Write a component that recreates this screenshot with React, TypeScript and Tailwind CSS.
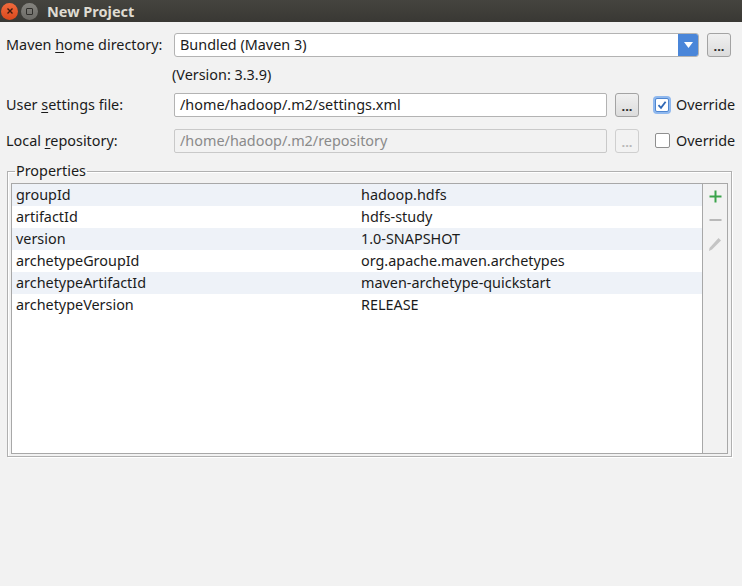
import React from "react";

const font = { fontFamily: '"Noto Sans", "Open Sans", sans-serif' };

function DotsButton({ disabled }: { disabled?: boolean }) {
  return (
    <div
      className={
        "w-[24px] h-[24px] rounded-[3px] border flex items-end justify-center pb-[3px] text-[13px] leading-none font-bold " +
        (disabled
          ? "border-[#cfcfcf] bg-[#f2f2f2] text-[#b8b8b8]"
          : "border-[#a3a3a3] bg-gradient-to-b from-[#f0f0f0] to-[#dcdcdc] text-[#2a2a2a]")
      }
    >
      ...
    </div>
  );
}

function Checkbox({ checked }: { checked?: boolean }) {
  if (checked) {
    return (
      <div className="w-[18px] h-[18px] rounded-[4px] bg-[#8fb8ee] flex items-center justify-center">
        <div className="w-[14px] h-[14px] rounded-[2px] bg-white border border-[#4f86d0] flex items-center justify-center">
          <svg width="10" height="10" viewBox="0 0 10 10">
            <path d="M1.5 5.2 L4 7.8 L8.6 1.8" fill="none" stroke="#2f67b5" strokeWidth="1.8" />
          </svg>
        </div>
      </div>
    );
  }
  return (
    <div className="w-[18px] h-[18px] flex items-center justify-center">
      <div className="w-[15px] h-[15px] rounded-[2px] bg-white border border-[#8f8f8f]" />
    </div>
  );
}

const rows: [string, string][] = [
  ["groupId", "hadoop.hdfs"],
  ["artifactId", "hdfs-study"],
  ["version", "1.0-SNAPSHOT"],
  ["archetypeGroupId", "org.apache.maven.archetypes"],
  ["archetypeArtifactId", "maven-archetype-quickstart"],
  ["archetypeVersion", "RELEASE"],
];

export default function App() {
  return (
    <div className="w-[742px] h-[586px] bg-[#f2f2f2] flex flex-col text-[14.4px] text-[#1b1b1b]" style={font}>
      {/* Title bar */}
      <div className="h-[22px] bg-gradient-to-b from-[#45443f] to-[#393834] flex items-center shrink-0">
        <div className="ml-[1px] w-[17px] h-[17px] rounded-full bg-gradient-to-b from-[#f06a3c] to-[#d9481c] flex items-center justify-center">
          <svg width="8" height="8" viewBox="0 0 8 8">
            <path d="M1.5 1.5 L6.5 6.5 M6.5 1.5 L1.5 6.5" stroke="#3a1a10" strokeWidth="1.4" />
          </svg>
        </div>
        <div className="ml-[3px] w-[17px] h-[17px] rounded-full bg-gradient-to-b from-[#85847f] to-[#6b6a66] flex items-center justify-center">
          <div className="w-[7px] h-[7px] border border-[#2f2e2b] rounded-[1px]" />
        </div>
        <div className="ml-[9px] text-[14.5px] font-bold text-[#dfdbd2] leading-none">New Project</div>
      </div>

      {/* Form */}
      <div className="flex flex-col pl-[6px] pt-[11px]">
        <div className="flex items-center h-[24px] mr-[11px]">
          <div className="w-[168px]">
            Maven <u className="underline-offset-2">h</u>ome directory:
          </div>
          <div className="flex-1 h-[24px] bg-white border border-[#b3b3b3] rounded-[3px] flex items-center overflow-hidden">
            <div className="flex-1 pl-[5px]">Bundled (Maven 3)</div>
            <div className="w-[20px] h-full bg-[#4a86d9] flex items-center justify-center">
              <svg width="9" height="6" viewBox="0 0 9 6">
                <path d="M0 0 L9 0 L4.5 6 Z" fill="#ffffff" />
              </svg>
            </div>
          </div>
          <div className="ml-[8px]">
            <DotsButton />
          </div>
        </div>
        <div className="h-[36px] flex items-center pl-[166px]">(Version: 3.3.9)</div>
        <div className="flex items-center h-[24px]">
          <div className="w-[168px]">
            User <u className="underline-offset-2">s</u>ettings file:
          </div>
          <div className="flex-1 h-[24px] bg-white border border-[#b3b3b3] rounded-[2px] flex items-center pl-[5px]">
            /home/hadoop/.m2/settings.xml
          </div>
          <div className="ml-[8px]">
            <DotsButton />
          </div>
          <div className="ml-[14px] w-[89px] flex items-center">
            <Checkbox checked />
            <span className="ml-[5px]">Override</span>
          </div>
        </div>
        <div className="flex items-center h-[24px] mt-[12px]">
          <div className="w-[168px]">
            Local <u className="underline-offset-2">r</u>epository:
          </div>
          <div className="flex-1 h-[24px] bg-[#f2f2f2] border border-[#c9c9c9] rounded-[2px] flex items-center pl-[5px] text-[#8a8a8a]">
            /home/hadoop/.m2/repository
          </div>
          <div className="ml-[8px]">
            <DotsButton disabled />
          </div>
          <div className="ml-[14px] w-[89px] flex items-center">
            <Checkbox />
            <span className="ml-[5px]">Override</span>
          </div>
        </div>
      </div>

      {/* Properties group */}
      <fieldset className="ml-[7px] mr-[10px] mt-[9px] h-[295px] border border-[#b0b0b0] shadow-[1px_1px_0_#ffffff,inset_1px_1px_0_#ffffff] px-[3px] pb-[3px]">
        <legend className="ml-[4px] px-[1px] leading-[18px]">Properties</legend>
        <div className="h-[271px] mt-[3px] border border-[#a8a8a8] flex bg-white">
          <div className="flex-1 flex flex-col">
            {rows.map(([k, v], i) => (
              <div
                key={k}
                className={"h-[22px] flex items-center " + (i % 2 === 0 ? "bg-[#eef2f8]" : "bg-white")}
              >
                <div className="w-[344px] pl-[4px]">{k}</div>
                <div className="pl-[5px]">{v}</div>
              </div>
            ))}
          </div>
          <div className="w-[25px] border-l border-[#a8a8a8] bg-[#f2f2f2] flex flex-col items-center pt-[6px] gap-[11px]">
            <svg width="13" height="13" viewBox="0 0 13 13">
              <path d="M6.5 0.5 V12.5 M0.5 6.5 H12.5" stroke="#3aa34b" strokeWidth="2" />
            </svg>
            <svg width="13" height="12" viewBox="0 0 13 12">
              <path d="M0.5 6 H12.5" stroke="#b9b9b9" strokeWidth="2" />
            </svg>
            <svg width="14" height="15" viewBox="0 0 14 15">
              <path d="M10.5 1 L13 3.5 L4 12.5 L1 14 L1.5 11 Z" fill="#c4c4c4" />
            </svg>
          </div>
        </div>
      </fieldset>
    </div>
  );
}
